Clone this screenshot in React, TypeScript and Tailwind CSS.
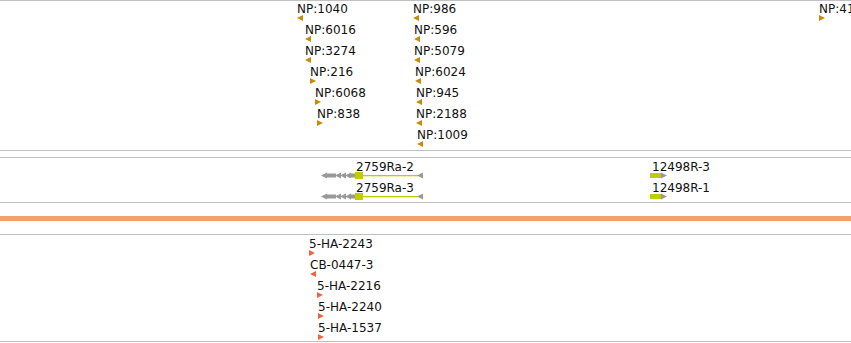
import React from "react";

type Feat = { label: string; x: number; row: number; dir: "L" | "R" };

const npFeatures: Feat[] = [
  { label: "NP:1040", x: 297, row: 0, dir: "L" },
  { label: "NP:6016", x: 305, row: 1, dir: "L" },
  { label: "NP:3274", x: 305, row: 2, dir: "L" },
  { label: "NP:216", x: 310, row: 3, dir: "R" },
  { label: "NP:6068", x: 315, row: 4, dir: "R" },
  { label: "NP:838", x: 317, row: 5, dir: "R" },
  { label: "NP:986", x: 413, row: 0, dir: "L" },
  { label: "NP:596", x: 414, row: 1, dir: "L" },
  { label: "NP:5079", x: 414, row: 2, dir: "L" },
  { label: "NP:6024", x: 415, row: 3, dir: "L" },
  { label: "NP:945", x: 416, row: 4, dir: "L" },
  { label: "NP:2188", x: 416, row: 5, dir: "L" },
  { label: "NP:1009", x: 417, row: 6, dir: "L" },
  { label: "NP:41", x: 819, row: 0, dir: "R" },
];

const haFeatures: Feat[] = [
  { label: "5-HA-2243", x: 309, row: 0, dir: "R" },
  { label: "CB-0447-3", x: 310, row: 1, dir: "L" },
  { label: "5-HA-2216", x: 317, row: 2, dir: "R" },
  { label: "5-HA-2240", x: 318, row: 3, dir: "R" },
  { label: "5-HA-1537", x: 318, row: 4, dir: "R" },
];

function Arrow({ dir, color }: { dir: "L" | "R"; color: string }) {
  return (
    <svg width="7" height="6" viewBox="0 0 7 6" className="block">
      {dir === "L" ? (
        <polygon points="0,3 6,0 6,6" fill={color} />
      ) : (
        <polygon points="0,0 6,3 0,6" fill={color} />
      )}
    </svg>
  );
}

function FeatureLabel({
  f,
  top,
  color,
}: {
  f: Feat;
  top: number;
  color: string;
}) {
  return (
    <div className="absolute" style={{ left: f.x, top: top + f.row * 21 }}>
      <div className="text-[12px] leading-[14px] text-[#111] whitespace-nowrap">
        {f.label}
      </div>
      <div className="absolute left-0 top-[13px]">
        <Arrow dir={f.dir} color={color} />
      </div>
    </div>
  );
}

function MinusGene({ top }: { top: number }) {
  return (
    <svg
      width="106"
      height="9"
      viewBox="0 0 106 9"
      className="absolute left-[320px]"
      style={{ top }}
    >
      <polygon points="1,4.5 7,1.5 7,7.5" fill="#999999" />
      <rect x="7" y="2.5" width="9" height="4" fill="#999999" />
      <polygon points="15,4.5 21,1.5 21,7.5" fill="#999999" />
      <polygon points="20,4.5 26,1.5 26,7.5" fill="#999999" />
      <polygon points="25,4.5 31,1.5 31,7.5" fill="#999999" />
      <rect x="30" y="2.5" width="6" height="4" fill="#999999" />
      <rect x="35" y="1" width="8" height="7" fill="#bfcc00" />
      <rect x="43" y="4" width="55" height="1.3" fill="#bfcc00" />
      <polygon points="97,4.5 103,1.5 103,7.5" fill="#999999" />
    </svg>
  );
}

function PlusGene({ top }: { top: number }) {
  return (
    <svg
      width="20"
      height="9"
      viewBox="0 0 20 9"
      className="absolute left-[650px]"
      style={{ top }}
    >
      <rect x="0" y="2" width="11" height="5" fill="#bfcc00" />
      <polygon points="11,1.5 17,4.5 11,7.5" fill="#999999" />
    </svg>
  );
}

export default function App() {
  return (
    <div
      className="w-[851px] h-[343px] bg-white overflow-hidden flex flex-col"
      style={{ fontFamily: "'DejaVu Sans', sans-serif" }}
    >
      <div className="h-px bg-[#c0c0c0] shrink-0" />
      <div className="relative h-[149px] shrink-0">
        {npFeatures.map((f) => (
          <FeatureLabel key={f.label} f={f} top={1} color="#c98a06" />
        ))}
      </div>
      <div className="h-px bg-[#c0c0c0] shrink-0" />
      <div className="h-[6px] shrink-0" />
      <div className="h-px bg-[#c0c0c0] shrink-0" />
      <div className="relative h-[44px] shrink-0">
        <div className="absolute left-[356px] top-[2px] text-[12px] leading-[14px] text-[#111]">
          2759Ra-2
        </div>
        <MinusGene top={13} />
        <div className="absolute left-[356px] top-[23px] text-[12px] leading-[14px] text-[#111]">
          2759Ra-3
        </div>
        <MinusGene top={34} />
        <div className="absolute left-[652px] top-[2px] text-[12px] leading-[14px] text-[#111]">
          12498R-3
        </div>
        <PlusGene top={13} />
        <div className="absolute left-[652px] top-[23px] text-[12px] leading-[14px] text-[#111]">
          12498R-1
        </div>
        <PlusGene top={34} />
      </div>
      <div className="h-px bg-[#c0c0c0] shrink-0" />
      <div className="h-[13px] shrink-0" />
      <div className="h-[5px] bg-[#f3a26d] shrink-0" />
      <div className="h-[13px] shrink-0" />
      <div className="h-px bg-[#c0c0c0] shrink-0" />
      <div className="relative h-[106px] shrink-0">
        {haFeatures.map((f) => (
          <FeatureLabel key={f.label} f={f} top={2} color="#f26440" />
        ))}
      </div>
      <div className="h-px bg-[#c0c0c0] shrink-0" />
    </div>
  );
}
